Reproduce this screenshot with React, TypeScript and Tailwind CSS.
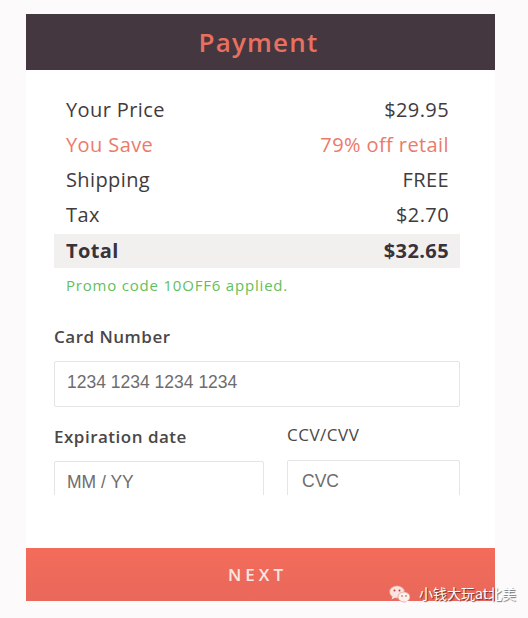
const rows = [
  { label: "Your Price", value: "$29.95", accent: false },
  { label: "You Save", value: "79% off retail", accent: true },
  { label: "Shipping", value: "FREE", accent: false },
  { label: "Tax", value: "$2.70", accent: false },
];

function WeChatIcon() {
  return (
    <svg width="22" height="18" viewBox="0 0 22 18">
      <ellipse cx="8" cy="7" rx="7.5" ry="6.2" fill="#fbe3df" stroke="#d98a80" strokeWidth="0.6" />
      <path d="M3.5 11.5 L2.5 14.5 L6.5 12.5 Z" fill="#fbe3df" />
      <circle cx="5.5" cy="5.5" r="1" fill="#c0463a" />
      <circle cx="10.5" cy="5.5" r="1" fill="#c0463a" />
      <ellipse cx="15" cy="12" rx="6" ry="5" fill="#fdf1ee" stroke="#d98a80" strokeWidth="0.6" />
      <path d="M18.5 15.5 L20 17.8 L16.5 16.5 Z" fill="#fdf1ee" />
      <circle cx="13" cy="11" r="0.8" fill="#c0463a" />
      <circle cx="17" cy="11" r="0.8" fill="#c0463a" />
    </svg>
  );
}

export default function App() {
  return (
    <div className="relative min-h-screen w-[528px] bg-[#fcfafb] pt-[14px] pl-[26px] font-['Open_Sans',sans-serif]">
      <div className="w-[469px]">
        {/* header */}
        <div className="flex h-[56px] items-center justify-center bg-[#45373f]">
          <h1 className="pr-[4px] text-[26px] font-semibold tracking-[1.2px] text-[#e8705f]">Payment</h1>
        </div>

        {/* body */}
        <div className="h-[478px] bg-white">
          <div className="h-[425px] overflow-hidden pl-[28px] pr-[35px] pt-[22px]">
            {rows.map((r) => (
              <div
                key={r.label}
                className={`flex h-[35px] items-center justify-between pl-[12px] pr-[11px] text-[20px] tracking-[0.4px] ${
                  r.accent ? "text-[#ec7a6b]" : "text-[#3f3b3e]"
                }`}
              >
                <span>{r.label}</span>
                <span>{r.value}</span>
              </div>
            ))}
            <div className="mt-[2px] flex h-[34px] items-center justify-between bg-[#f2f0ee] pl-[12px] pr-[11px] text-[20px] font-bold tracking-[0.4px] text-[#38333a]">
              <span>Total</span>
              <span>$32.65</span>
            </div>
            <p className="mt-[7px] pl-[12px] text-[15px] leading-[20px] tracking-[0.8px] text-[#62bf5c]">Promo code 10OFF6 applied.</p>

            <label className="mt-[30px] block text-[17px] leading-[24px] font-semibold tracking-[0.5px] text-[#4b4748]">Card Number</label>
            <div className="mt-[12px] flex h-[46px] items-center rounded-[2px] border border-[#e6e4e4] pb-[4px] pl-[12px] font-['Liberation_Sans',sans-serif] text-[17.5px] text-[#6f6c6d]">
              1234 1234 1234 1234
            </div>

            <div className="mt-[18px] grid grid-cols-[210px_173px] gap-x-[23px]">
              <div>
                <label className="block text-[17px] leading-[24px] font-semibold tracking-[0.5px] text-[#4b4748]">Expiration date</label>
                <div className="mt-[12px] flex h-[46px] items-center rounded-[2px] border border-[#e6e4e4] pb-[4px] pl-[12px] font-['Liberation_Sans',sans-serif] text-[17.5px] text-[#6f6c6d]">
                  MM / YY
                </div>
              </div>
              <div>
                <label className="-mt-[2px] block text-[17px] leading-[24px] tracking-[0.5px] text-[#4b4748]">CCV/CVV</label>
                <div className="mt-[13px] flex h-[46px] items-center rounded-[2px] border border-[#e6e4e4] pb-[4px] pl-[14px] font-['Liberation_Sans',sans-serif] text-[17.5px] text-[#6f6c6d]">
                  CVC
                </div>
              </div>
            </div>
          </div>
        </div>

        {/* next button */}
        <button className="flex h-[53px] w-full items-center justify-center bg-gradient-to-b from-[#f36c5b] to-[#e9685a] pr-[6px] text-[17px] font-semibold tracking-[4px] text-[#fbe6e2]">
          NEXT
        </button>
      </div>

      {/* watermark */}
      <div className="absolute left-[389px] top-[583px] flex items-center gap-[8px]">
        <WeChatIcon />
        <span className="font-['Noto_Sans_CJK_SC',sans-serif] text-[14px] text-white [text-shadow:1px_1px_1px_rgba(0,0,0,0.55)]">
          小钱大玩at北美
        </span>
      </div>
    </div>
  );
}
